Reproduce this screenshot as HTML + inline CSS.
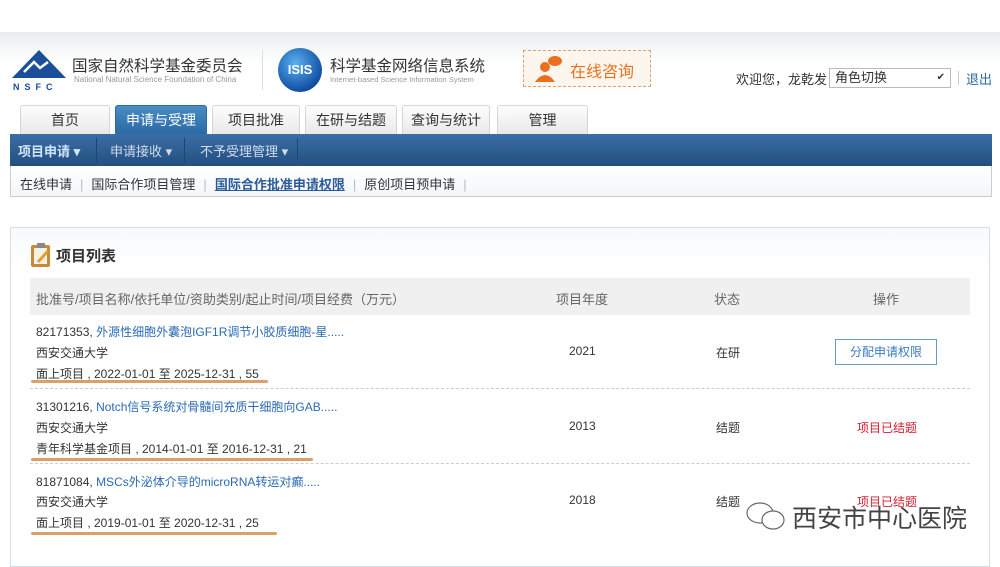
<!DOCTYPE html>
<html><head><meta charset="utf-8"><style>
*{margin:0;padding:0;box-sizing:border-box}
body{width:1000px;height:559px;overflow:hidden;background:#fff;font-family:"Liberation Sans","Noto Sans CJK SC",sans-serif;position:relative;color:#333}
.a{position:absolute;white-space:nowrap}
.tab{position:absolute;top:105px;height:29px;border:1px solid #d5d5d5;border-bottom:none;border-radius:3px 3px 0 0;background:linear-gradient(#fdfdfd,#e9e9e9);font-size:14px;text-align:center;line-height:29px;color:#333}
.tab.on{background:linear-gradient(#4a8cc4,#2a6aa5);color:#fff;border-color:#2a6aa5}
.sep{position:absolute;top:138px;width:1px;height:24px;background:#1c4670}
.s{color:#bbb;margin:0 8px}
</style></head><body>
<div class="a" style="left:0;top:32px;width:1000px;height:30px;background:linear-gradient(#e8ebee,#fff)"></div>
<svg class="a" style="left:10px;top:48px" width="58" height="44"><polygon points="29,2 56,30 2,30" fill="#1b4f9a"/><path d="M14,24 L24,14 L30,20 L38,14" stroke="#fff" stroke-width="2.5" fill="none"/><text x="3" y="42" font-size="9" font-weight="bold" fill="#1b4f9a" font-family="Liberation Sans" letter-spacing="5">NSFC</text></svg>
<div class="a" style="left:72px;top:54px;font-size:15.5px;color:#333">国家自然科学基金委员会</div>
<div class="a" style="left:74px;top:75px;font-size:8px;color:#999">National Natural Science Foundation of China</div>
<div class="a" style="left:262px;top:50px;width:1px;height:40px;background:#ddd"></div>
<div class="a" style="left:278px;top:48px;width:44px;height:44px;border-radius:50%;background:radial-gradient(circle at 40% 35%,#5bb0f0,#0c4aa0 75%);color:#fff;font-size:13px;font-weight:bold;line-height:44px;text-align:center">ISIS</div>
<div class="a" style="left:330px;top:54px;font-size:15.5px;color:#333">科学基金网络信息系统</div>
<div class="a" style="left:330px;top:75px;font-size:7.5px;color:#999">Internet-based Science Information System</div>
<div class="a" style="left:523px;top:50px;width:128px;height:37px;border:1px dashed #e0a070;background:#fdf6ee"></div>
<svg class="a" style="left:533px;top:54px" width="32" height="30"><circle cx="12" cy="13" r="5" fill="#e8701f"/><path d="M2,28 Q12,14 22,28Z" fill="#e8701f"/><ellipse cx="22" cy="7" rx="7" ry="5" fill="#e8701f"/></svg>
<div class="a" style="left:570px;top:58px;font-size:16px;color:#e8701f">在线咨询</div>
<div class="a" style="left:736px;top:69px;font-size:13px;color:#333">欢迎您，龙乾发</div>
<div class="a" style="left:829px;top:68px;width:122px;height:20px;border:1px solid #bbb;background:#fff;font-size:13px;line-height:18px;padding-left:5px">角色切换<span style="position:absolute;right:5px;font-size:10px">&#10004;</span></div>
<div class="a" style="left:958px;top:71px;width:1px;height:14px;background:#ccc"></div>
<div class="a" style="left:966px;top:69px;font-size:13px;color:#2a6aa5">退出</div>
<div class="tab" style="left:20px;width:90px">首页</div>
<div class="tab on" style="left:115px;width:92px">申请与受理</div>
<div class="tab" style="left:212px;width:88px">项目批准</div>
<div class="tab" style="left:305px;width:92px">在研与结题</div>
<div class="tab" style="left:402px;width:88px">查询与统计</div>
<div class="tab" style="left:497px;width:91px">管理</div>
<div class="a" style="left:10px;top:134px;width:982px;height:32px;background:linear-gradient(#3a6fa5,#244f80)"></div>
<div class="a" style="left:18px;top:141px;font-size:13px;font-weight:bold;color:#cfe6ff">项目申请 ▾</div>
<div class="sep" style="left:96px"></div>
<div class="a" style="left:110px;top:141px;font-size:13px;color:#d0dced">申请接收 ▾</div>
<div class="sep" style="left:184px"></div>
<div class="a" style="left:200px;top:141px;font-size:13px;color:#d0dced">不予受理管理 ▾</div>
<div class="sep" style="left:297px"></div>
<div class="a" style="left:10px;top:166px;width:982px;height:31px;border:1px solid #ccc;border-top:none;background:linear-gradient(#fff,#f3f6f9)"></div>
<div class="a" style="left:20px;top:174px;font-size:13px;color:#333">在线申请<span class="s">|</span>国际合作项目管理<span class="s">|</span><span style="color:#2a5a9a;font-weight:bold;text-decoration:underline">国际合作批准申请权限</span><span class="s">|</span>原创项目预申请<span class="s">|</span></div>
<div class="a" style="left:10px;top:227px;width:980px;height:340px;border:1px solid #d5dde5;background:linear-gradient(#f8f9fb,#fff 40px)"></div>
<svg class="a" style="left:30px;top:242px" width="22" height="26"><rect x="1" y="3" width="19" height="22" rx="2" fill="#c88a3a"/><rect x="4" y="6" width="13" height="16" fill="#f8f2e4"/><rect x="7" y="1" width="8" height="5" fill="#888"/><path d="M8,20 L18,9" stroke="#e0a030" stroke-width="3"/></svg>
<div class="a" style="left:56px;top:245px;font-size:15px;font-weight:bold;color:#333">项目列表</div>
<div class="a" style="left:30px;top:278px;width:940px;height:37px;background:#f0f0f0"></div>
<div class="a" style="left:36px;top:289px;font-size:13px;color:#666">批准号/项目名称/依托单位/资助类别/起止时间/项目经费（万元）</div>
<div class="a" style="left:556px;top:289px;font-size:13px;color:#666">项目年度</div>
<div class="a" style="left:714px;top:289px;font-size:13px;color:#666">状态</div>
<div class="a" style="left:873px;top:289px;font-size:13px;color:#666">操作</div>
<div class="a" style="left:30px;top:388px;width:940px;border-top:1px dashed #ccc"></div>
<div class="a" style="left:30px;top:463px;width:940px;border-top:1px dashed #ccc"></div>
<div class="a" style="left:36px;top:323px;font-size:12px">82171353, <span style="color:#2a6ab5">外源性细胞外囊泡IGF1R调节小胶质细胞-星.....</span></div>
<div class="a" style="left:36px;top:344px;font-size:12px">西安交通大学</div>
<div class="a" style="left:36px;top:365px;font-size:12px">面上项目 , 2022-01-01 至 2025-12-31 , 55</div>
<div class="a" style="left:31px;top:380px;width:237px;height:3px;background:#d9a06a;border-radius:2px"></div>
<div class="a" style="left:569px;top:344px;font-size:12px">2021</div>
<div class="a" style="left:716px;top:344px;font-size:12px">在研</div>
<div class="a" style="left:835px;top:339px;width:102px;height:26px;border:1px solid #6a9ac8;color:#3a7ac0;font-size:12px;text-align:center;line-height:24px">分配申请权限</div>
<div class="a" style="left:36px;top:398px;font-size:12px">31301216, <span style="color:#2a6ab5">Notch信号系统对骨髓间充质干细胞向GAB.....</span></div>
<div class="a" style="left:36px;top:419px;font-size:12px">西安交通大学</div>
<div class="a" style="left:36px;top:440px;font-size:12px">青年科学基金项目 , 2014-01-01 至 2016-12-31 , 21</div>
<div class="a" style="left:31px;top:458px;width:282px;height:3px;background:#d9a06a;border-radius:2px"></div>
<div class="a" style="left:569px;top:419px;font-size:12px">2013</div>
<div class="a" style="left:716px;top:419px;font-size:12px">结题</div>
<div class="a" style="left:857px;top:419px;font-size:12px;color:#d02030">项目已结题</div>
<div class="a" style="left:36px;top:473px;font-size:12px">81871084, <span style="color:#2a6ab5">MSCs外泌体介导的microRNA转运对癫.....</span></div>
<div class="a" style="left:36px;top:493px;font-size:12px">西安交通大学</div>
<div class="a" style="left:36px;top:514px;font-size:12px">面上项目 , 2019-01-01 至 2020-12-31 , 25</div>
<div class="a" style="left:31px;top:532px;width:246px;height:3px;background:#d9a06a;border-radius:2px"></div>
<div class="a" style="left:569px;top:493px;font-size:12px">2018</div>
<div class="a" style="left:716px;top:493px;font-size:12px">结题</div>
<div class="a" style="left:857px;top:493px;font-size:12px;color:#d02030">项目已结题</div>
<svg class="a" style="left:745px;top:500px" width="42" height="32"><ellipse cx="15" cy="13" rx="13" ry="10" fill="none" stroke="#666" stroke-width="1.2"/><ellipse cx="28" cy="20" rx="11" ry="9" fill="#fff" stroke="#666" stroke-width="1.2"/></svg>
<div class="a" style="left:792px;top:499px;font-size:25px;color:#444;text-shadow:0 0 2px #fff,0 0 2px #fff">西安市中心医院</div>
</body></html>
